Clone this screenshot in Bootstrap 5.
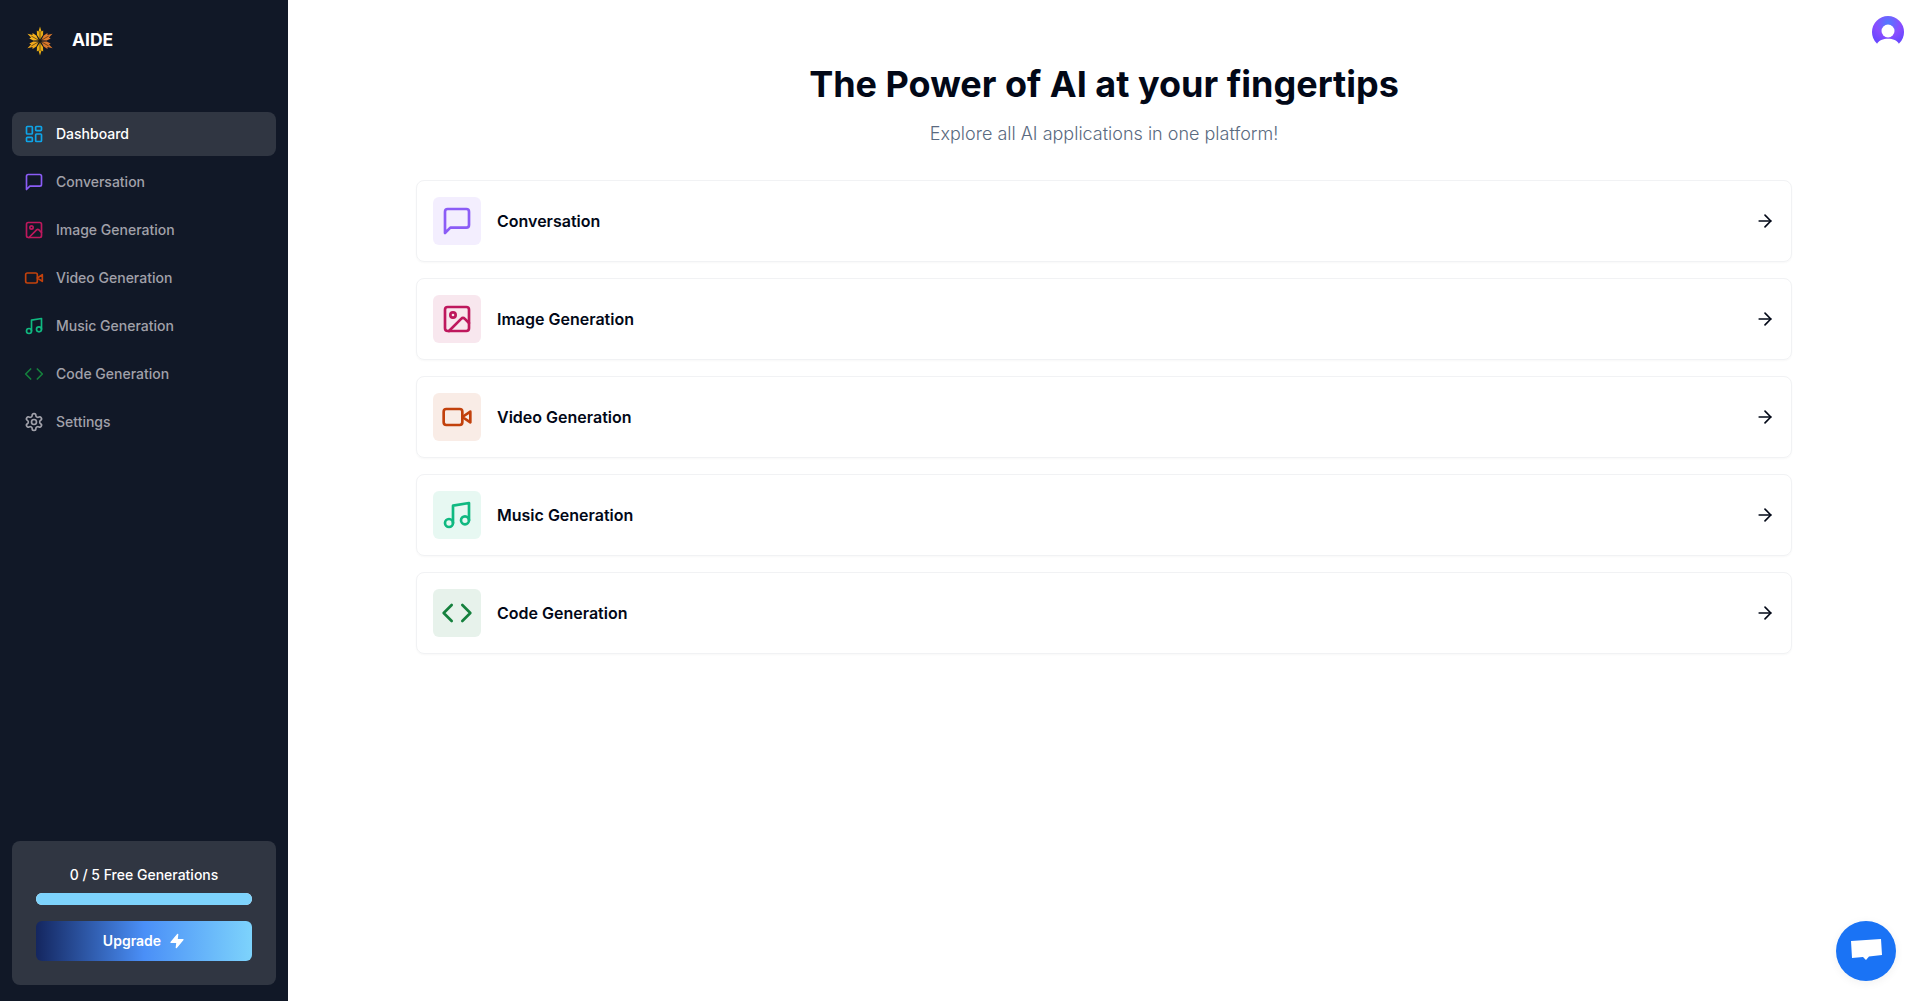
<!DOCTYPE html>
<html lang="en">
<head>
  <meta charset="UTF-8" />
  <meta name="viewport" content="width=device-width, initial-scale=1.0"/>
  <title>AIDE Dashboard</title>
  <link href="https://cdn.jsdelivr.net/npm/bootstrap@5.3.3/dist/css/bootstrap.min.css" rel="stylesheet">
  <style>
    html, body { height: 100%; }
    body {
      font-family: "Inter", "Liberation Sans", sans-serif;
      color: #020817;
      background: #fff;
      overflow: hidden;
    }
    .side-bar {
      width: 288px;
      height: 100vh;
      background: #111827;
      padding: 12px 12px 16px;
      flex: none;
    }
    .brand-row { height: 38px; margin: 10px 0 52px 12px; gap: 16px; }
    .brand-row span {
      color: #fff;
      font-size: 17.5px;
      font-weight: 700;
      line-height: 1;
      margin-bottom: 3px;
    }
    .side-link {
      height: 44px;
      margin-bottom: 4px;
      padding: 0 12px;
      gap: 12px;
      border-radius: 8px;
      color: #a1a1aa;
      font-size: 14px;
      font-weight: 500;
      line-height: 20px;
      text-decoration: none;
    }
    .side-link.is-active { background: #303642; color: #fff; }
    .side-link svg { width: 20px; height: 20px; flex: none; }
    .ic { fill: none; stroke: currentColor; stroke-width: 2; stroke-linecap: round; stroke-linejoin: round; }
    .c-sky { color: #0ea5e9; }
    .c-violet { color: #8b5cf6; }
    .c-pink { color: #be185d; }
    .c-orange { color: #c2410c; }
    .c-emerald { color: #10b981; }
    .c-green { color: #15803d; }
    .c-plain { color: #a1a1aa; }
    .bg-violet { background: rgba(139, 92, 246, .1); }
    .bg-pink { background: rgba(190, 24, 93, .1); }
    .bg-orange { background: rgba(194, 65, 12, .1); }
    .bg-emerald { background: rgba(16, 185, 129, .1); }
    .bg-green { background: rgba(21, 128, 61, .1); }
    .free-box {
      height: 144px;
      padding: 24px;
      background: #303642;
      border: 0;
      border-radius: 8px;
    }
    .free-label { color: #fff; font-size: 14px; font-weight: 500; line-height: 20px; margin: 0 0 8px; text-align: center; }
    .free-bar { height: 12px; border-radius: 6px; background: #f1f5f9; margin-bottom: 16px; }
    .free-bar .progress-bar { background: #7dd3fc; }
    .upgrade-btn {
      height: 40px;
      border: 0;
      border-radius: 6px;
      background: linear-gradient(to right, #14265f, #4a8ff7 50%, #7dd3fc);
      color: #fff;
      font-size: 14px;
      font-weight: 600;
      line-height: 20px;
      gap: 8px;
    }
    .upgrade-btn:hover { color: #fff; background: linear-gradient(to right, #14265f, #4a8ff7 50%, #7dd3fc); }
    .upgrade-btn svg { width: 16px; height: 16px; fill: #fff; stroke: #fff; stroke-width: 2; stroke-linejoin: round; }
    .top-row { height: 64px; padding: 16px; }
    .page-title { font-size: 36px; font-weight: 700; line-height: 40px; margin: 0 0 16px; color: #020817; letter-spacing: 0; }
    .page-sub { font-size: 18px; font-weight: 300; line-height: 28px; margin: 0 0 32px; color: #5a6a80; }
    .tool-list { padding: 0 128px; gap: 16px; }
    .tool-card {
      height: 82px;
      padding: 16px;
      border: 1px solid #f1f2f4;
      border-radius: 8px;
      box-shadow: 0 1px 2px rgba(0, 0, 0, .03);
      color: #020817;
      text-decoration: none;
    }
    .tool-box { width: 48px; height: 48px; border-radius: 6px; margin-right: 16px; }
    .tool-box svg { width: 32px; height: 32px; }
    .tool-name { font-size: 16px; font-weight: 600; }
    .go-arrow { width: 20px; height: 20px; color: #020817; }
    .chat-bubble {
      position: fixed;
      right: 24px;
      bottom: 20px;
      width: 60px;
      height: 60px;
      border-radius: 50%;
      background: #1a73f5;
      box-shadow: 0 2px 10px rgba(0, 0, 0, .06);
    }
  </style>
</head>
<body>
  <div class="d-flex">
    <aside class="side-bar d-flex flex-column">
      <div class="brand-row d-flex align-items-center">
        <svg width="32" height="32" viewBox="0 0 32 32">
          <path d="M16 14.500 L13 10 L12.800 5.500 L14.500 6.500 L16 1.500 L17.500 6.500 L19.200 5.500 L19 10Z" fill="#e9ad14"/>
          <path d="M16 14.500 L13 10 L12.800 5.500 L14.500 6.500 L16 1.500 L17.500 6.500 L19.200 5.500 L19 10Z" fill="#e07b2c" transform="rotate(60 16 16)"/>
          <path d="M16 14.500 L13 10 L12.800 5.500 L14.500 6.500 L16 1.500 L17.500 6.500 L19.200 5.500 L19 10Z" fill="#d9762b" transform="rotate(120 16 16)"/>
          <path d="M16 14.500 L13 10 L12.800 5.500 L14.500 6.500 L16 1.500 L17.500 6.500 L19.200 5.500 L19 10Z" fill="#e9ad14" transform="rotate(180 16 16)"/>
          <path d="M16 14.500 L13 10 L12.800 5.500 L14.500 6.500 L16 1.500 L17.500 6.500 L19.200 5.500 L19 10Z" fill="#f0a81c" transform="rotate(240 16 16)"/>
          <path d="M16 14.500 L13 10 L12.800 5.500 L14.500 6.500 L16 1.500 L17.500 6.500 L19.200 5.500 L19 10Z" fill="#f5b21d" transform="rotate(300 16 16)"/>
          <path d="M16 6V26M7.300 11 24.700 21M24.700 11 7.300 21" stroke="#3d2f10" stroke-width=".7"/>
          <circle cx="16" cy="16" r="1.400" fill="#1c1a12"/>
        </svg>
        <span>AIDE</span>
      </div>
      <nav class="nav flex-column flex-grow-1">
        <a href="#" class="side-link is-active d-flex align-items-center">
          <svg class="ic c-sky" viewBox="0 0 24 24"><rect x="3" y="3" width="7" height="9" rx="1"/><rect x="14" y="3" width="7" height="5" rx="1"/><rect x="14" y="12" width="7" height="9" rx="1"/><rect x="3" y="16" width="7" height="5" rx="1"/></svg>
          Dashboard
        </a>
        <a href="#" class="side-link d-flex align-items-center">
          <svg class="ic c-violet" viewBox="0 0 24 24"><path d="M21 15a2 2 0 0 1-2 2H7l-4 4V5a2 2 0 0 1 2-2h14a2 2 0 0 1 2 2z"/></svg>
          Conversation
        </a>
        <a href="#" class="side-link d-flex align-items-center">
          <svg class="ic c-pink" viewBox="0 0 24 24"><rect x="3" y="3" width="18" height="18" rx="2"/><circle cx="9" cy="9" r="2"/><path d="m21 15-3.086-3.086a2 2 0 0 0-2.828 0L6 21"/></svg>
          Image Generation
        </a>
        <a href="#" class="side-link d-flex align-items-center">
          <svg class="ic c-orange" viewBox="0 0 24 24"><path d="m22 8-6 4 6 4V8Z"/><rect x="2" y="6" width="14" height="12" rx="2"/></svg>
          Video Generation
        </a>
        <a href="#" class="side-link d-flex align-items-center">
          <svg class="ic c-emerald" viewBox="0 0 24 24"><path d="M9 18V5l12-2v13"/><circle cx="6" cy="18" r="3"/><circle cx="18" cy="16" r="3"/></svg>
          Music Generation
        </a>
        <a href="#" class="side-link d-flex align-items-center">
          <svg class="ic c-green" viewBox="0 0 24 24"><polyline points="16 18 22 12 16 6"/><polyline points="8 6 2 12 8 18"/></svg>
          Code Generation
        </a>
        <a href="#" class="side-link d-flex align-items-center">
          <svg class="ic c-plain" viewBox="0 0 24 24"><path d="M12.22 2h-.44a2 2 0 0 0-2 2v.18a2 2 0 0 1-1 1.73l-.43.25a2 2 0 0 1-2 0l-.15-.08a2 2 0 0 0-2.73.73l-.22.38a2 2 0 0 0 .73 2.73l.15.1a2 2 0 0 1 1 1.72v.51a2 2 0 0 1-1 1.74l-.15.09a2 2 0 0 0-.73 2.73l.22.38a2 2 0 0 0 2.73.73l.15-.08a2 2 0 0 1 2 0l.43.25a2 2 0 0 1 1 1.73V20a2 2 0 0 0 2 2h.44a2 2 0 0 0 2-2v-.18a2 2 0 0 1 1-1.73l.43-.25a2 2 0 0 1 2 0l.15.08a2 2 0 0 0 2.73-.73l.22-.39a2 2 0 0 0-.73-2.73l-.15-.08a2 2 0 0 1-1-1.74v-.5a2 2 0 0 1 1-1.74l.15-.09a2 2 0 0 0 .73-2.73l-.22-.38a2 2 0 0 0-2.73-.73l-.15.08a2 2 0 0 1-2 0l-.43-.25a2 2 0 0 1-1-1.73V4a2 2 0 0 0-2-2z"/><circle cx="12" cy="12" r="3"/></svg>
          Settings
        </a>
      </nav>
      <div class="card free-box">
        <p class="free-label">0 / 5 Free Generations</p>
        <div class="progress free-bar"><div class="progress-bar" style="width:100%"></div></div>
        <button type="button" class="btn upgrade-btn w-100 d-flex align-items-center justify-content-center">
          Upgrade
          <svg viewBox="0 0 24 24"><polygon points="13 2 3 14 12 14 11 22 21 10 12 10 13 2"/></svg>
        </button>
      </div>
    </aside>

    <main class="flex-grow-1">
      <div class="top-row d-flex justify-content-end">
        <svg width="32" height="32" viewBox="0 0 32 32">
          <defs>
            <radialGradient id="avaGrad" cx="50%" cy="22%" r="65%">
              <stop offset="0" stop-color="#4f7bff"/>
              <stop offset=".6" stop-color="#8a4dff"/>
              <stop offset="1" stop-color="#6a48ff"/>
            </radialGradient>
          </defs>
          <circle cx="16" cy="16" r="16" fill="url(#avaGrad)"/>
          <circle cx="16" cy="15" r="6.500" fill="#fff"/>
          <path d="M0 32V28H5C8 21 24 21 27 28H32V32Z" fill="#fff"/>
        </svg>
      </div>
      <div class="text-center">
        <h1 class="page-title">The Power of AI at your fingertips</h1>
        <p class="page-sub">Explore all AI applications in one platform!</p>
      </div>
      <div class="tool-list d-flex flex-column">
        <a href="#" class="tool-card d-flex align-items-center justify-content-between">
          <div class="d-flex align-items-center">
            <div class="tool-box bg-violet d-flex align-items-center justify-content-center">
              <svg class="ic c-violet" viewBox="0 0 24 24"><path d="M21 15a2 2 0 0 1-2 2H7l-4 4V5a2 2 0 0 1 2-2h14a2 2 0 0 1 2 2z"/></svg>
            </div>
            <div class="tool-name">Conversation</div>
          </div>
          <svg class="ic go-arrow" viewBox="0 0 24 24"><path d="M5 12h14"/><path d="m12 5 7 7-7 7"/></svg>
        </a>
        <a href="#" class="tool-card d-flex align-items-center justify-content-between">
          <div class="d-flex align-items-center">
            <div class="tool-box bg-pink d-flex align-items-center justify-content-center">
              <svg class="ic c-pink" viewBox="0 0 24 24"><rect x="3" y="3" width="18" height="18" rx="2"/><circle cx="9" cy="9" r="2"/><path d="m21 15-3.086-3.086a2 2 0 0 0-2.828 0L6 21"/></svg>
            </div>
            <div class="tool-name">Image Generation</div>
          </div>
          <svg class="ic go-arrow" viewBox="0 0 24 24"><path d="M5 12h14"/><path d="m12 5 7 7-7 7"/></svg>
        </a>
        <a href="#" class="tool-card d-flex align-items-center justify-content-between">
          <div class="d-flex align-items-center">
            <div class="tool-box bg-orange d-flex align-items-center justify-content-center">
              <svg class="ic c-orange" viewBox="0 0 24 24"><path d="m22 8-6 4 6 4V8Z"/><rect x="2" y="6" width="14" height="12" rx="2"/></svg>
            </div>
            <div class="tool-name">Video Generation</div>
          </div>
          <svg class="ic go-arrow" viewBox="0 0 24 24"><path d="M5 12h14"/><path d="m12 5 7 7-7 7"/></svg>
        </a>
        <a href="#" class="tool-card d-flex align-items-center justify-content-between">
          <div class="d-flex align-items-center">
            <div class="tool-box bg-emerald d-flex align-items-center justify-content-center">
              <svg class="ic c-emerald" viewBox="0 0 24 24"><path d="M9 18V5l12-2v13"/><circle cx="6" cy="18" r="3"/><circle cx="18" cy="16" r="3"/></svg>
            </div>
            <div class="tool-name">Music Generation</div>
          </div>
          <svg class="ic go-arrow" viewBox="0 0 24 24"><path d="M5 12h14"/><path d="m12 5 7 7-7 7"/></svg>
        </a>
        <a href="#" class="tool-card d-flex align-items-center justify-content-between">
          <div class="d-flex align-items-center">
            <div class="tool-box bg-green d-flex align-items-center justify-content-center">
              <svg class="ic c-green" viewBox="0 0 24 24"><polyline points="16 18 22 12 16 6"/><polyline points="8 6 2 12 8 18"/></svg>
            </div>
            <div class="tool-name">Code Generation</div>
          </div>
          <svg class="ic go-arrow" viewBox="0 0 24 24"><path d="M5 12h14"/><path d="m12 5 7 7-7 7"/></svg>
        </a>
      </div>
    </main>
  </div>

  <div class="chat-bubble d-flex align-items-center justify-content-center">
    <svg width="32" height="26" viewBox="0 0 32 26"><path d="M1 3 31 1 32 17 19 18.500 16 22 13 19 2 20Z" fill="#fff"/></svg>
  </div>
  <script src="https://cdn.jsdelivr.net/npm/bootstrap@5.3.3/dist/js/bootstrap.bundle.min.js"></script>
</body>
</html>
